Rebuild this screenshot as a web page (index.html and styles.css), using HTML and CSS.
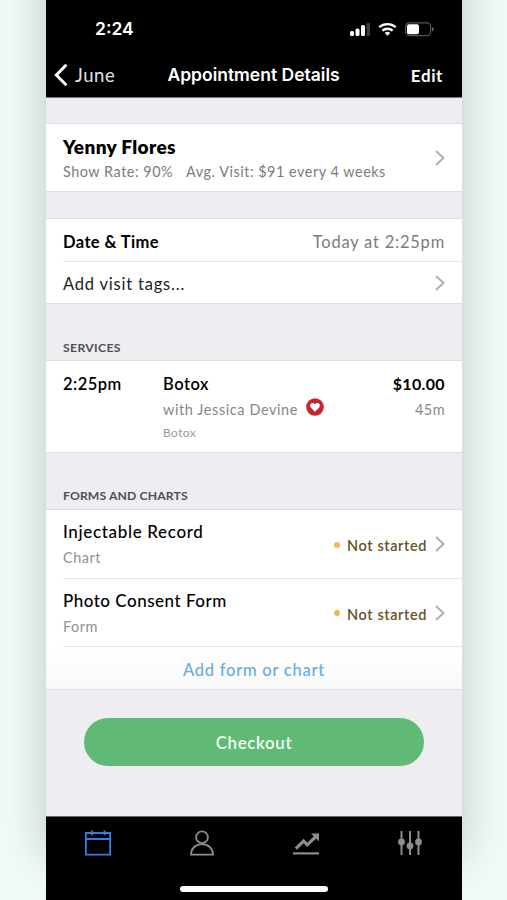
FILE: index.html
```html
<!DOCTYPE html>
<html lang="en">
<head>
<meta charset="utf-8">
<title>Appointment Details</title>
<link rel="stylesheet" href="styles.css">
</head>
<body>
<main class="phone">
  <header class="top">
    <div class="status">
      <span class="clock">2:24</span>
      <svg class="status-icons" width="86" height="18" viewBox="0 0 86 18">
        <g fill="#fff"><rect x="1" y="10" width="4" height="5" rx="1.5"/><rect x="6.5" y="7.5" width="4" height="7.5" rx="1.5"/><rect x="12" y="4" width="4" height="11" rx="1.5"/></g>
        <rect x="17.5" y="2" width="3.6" height="13" rx="1" fill="#3b3b3b"/>
        <g fill="none" stroke="#fff" stroke-width="2.4"><path d="M30.2 6.2a12.6 12.6 0 0 1 16.6 0"/><path d="M33.4 9.7a7.7 7.7 0 0 1 10.2 0"/></g>
        <path d="M38.5 14.8l-2.7-2.8a4 4 0 0 1 5.4 0z" fill="#fff"/>
        <rect x="56.6" y="1.9" width="25" height="12.8" rx="3.6" fill="none" stroke="#555" stroke-width="1.2"/>
        <rect x="58" y="3.3" width="12" height="10" rx="2" fill="#fff"/>
        <path d="M83 6v4.6q1.8-.9 1.8-2.3T83 6z" fill="#666"/>
      </svg>
    </div>
    <nav class="nav">
      <span class="back"><svg width="14" height="24" viewBox="0 0 14 24" fill="none" stroke="#fff" stroke-width="3"><path d="M12.4 1.8 2.4 12l10 10.2"/></svg><span class="june">June</span></span>
      <h1 class="heading">Appointment Details</h1>
      <span class="edit">Edit</span>
    </nav>
  </header>

  <section class="card client">
    <div class="stack">
      <strong class="name">Yenny Flores</strong>
      <div class="stats"><span>Show Rate: 90%</span><span>Avg. Visit: $91 every 4 weeks</span></div>
    </div>
    <svg class="chev" viewBox="0 0 10 16"><path d="M1 1l7.5 7L1 15"/></svg>
  </section>

  <section class="card visit">
    <div class="row"><span class="date-label">Date &amp; Time</span><span class="date-value">Today at 2:25pm</span></div>
    <div class="row"><span class="tags">Add visit tags...</span><svg class="chev" viewBox="0 0 10 16"><path d="M1 1l7.5 7L1 15"/></svg></div>
  </section>

  <h2 class="section services-title">SERVICES</h2>
  <section class="card service">
    <span class="time">2:25pm</span>
    <div class="treatment">
      <span class="botox">Botox</span>
      <span class="with"><span class="with-name">with Jessica Devine</span><svg width="18" height="18" viewBox="0 0 18 18"><circle cx="9" cy="9" r="8.8" fill="#c4262b"/><path d="M9 13.8 5 9.8C3.3 8 4.2 5 6.6 5 7.8 5 8.6 5.7 9 6.5 9.4 5.7 10.2 5 11.4 5c2.4 0 3.3 3 1.6 4.8z" fill="#fff"/></svg></span>
      <span class="small">Botox</span>
    </div>
    <div class="cost"><span class="price">$10.00</span><span class="mins">45m</span></div>
  </section>

  <h2 class="section forms-title">FORMS AND CHARTS</h2>
  <section class="card forms">
    <div class="form-row">
      <div class="stack"><span class="form-name injectable">Injectable Record</span><span class="kind">Chart</span></div>
      <i class="dot"></i><span class="state">Not started</span><svg class="chev" viewBox="0 0 10 16"><path d="M1 1l7.5 7L1 15"/></svg>
    </div>
    <div class="form-row">
      <div class="stack"><span class="form-name">Photo Consent Form</span><span class="kind">Form</span></div>
      <i class="dot"></i><span class="state">Not started</span><svg class="chev" viewBox="0 0 10 16"><path d="M1 1l7.5 7L1 15"/></svg>
    </div>
    <div class="add"><span>Add form or chart</span></div>
  </section>

  <button class="checkout" type="button">Checkout</button>

  <footer class="tabs">
    <div class="icons">
      <svg viewBox="0 0 28 26" fill="none" stroke="#397be6" stroke-width="1.8"><path d="M1.9 3h24.2v21.6H1.9zM1.9 9h24.2M7.9.6v4.6M20.5.6v4.6"/></svg>
      <svg viewBox="0 0 28 26" fill="none" stroke="#8d8d8d" stroke-width="1.8"><circle cx="14" cy="7.3" r="5.9"/><path d="M3 24.6h22c0-6.3-4.8-10.5-11-10.5S3 18.3 3 24.6z"/></svg>
      <svg viewBox="0 0 28 26" fill="none" stroke="#8d8d8d"><path d="M1 23.4h26" stroke-width="2.2"/><path d="M3.8 18.6 11.6 11l3.6 3.8L23.5 7" stroke-width="3.2"/><path d="M19 3.6h8v8z" fill="#8d8d8d" stroke="none"/></svg>
      <svg viewBox="0 0 28 26" fill="#8d8d8d" stroke="#8d8d8d" stroke-width="2"><path d="M5.5 1v24M14 1v24M22.5 1v24"/><g stroke="none"><circle cx="5.5" cy="12" r="3.4"/><circle cx="14" cy="16" r="3.4"/><circle cx="22.5" cy="12" r="3.4"/></g></svg>
    </div>
    <div class="home"></div>
  </footer>
</main>
</body>
</html>
```
FILE: styles.css
```css
* { box-sizing: border-box; }
html, body { height: 100%; }
body {
  margin: 0;
  overflow: hidden;
  background: #f0fbf8;
  font-family: Lato, "Liberation Sans", sans-serif;
  color: #000;
}
.phone {
  position: relative;
  width: 416px;
  height: 900px;
  margin-left: 46px;
  display: flex;
  flex-direction: column;
  background: #eeedf2;
}
.phone::before {
  content: "";
  position: absolute;
  inset: -60px 0 44px;
  z-index: -1;
  box-shadow: 0 0 42px rgba(20, 10, 15, .22);
}
h1, h2 { margin: 0; }
span, strong { white-space: nowrap; }
.top { flex: none; height: 98px; background: #000; color: #fff; border-bottom: 1px solid #77777b; }
.status { display: flex; justify-content: space-between; align-items: center; height: 58px; padding: 0 27px 0 49px; }
.clock { font: 600 17.5px/20px Inter, sans-serif; }
.status-icons { margin-top: 1px; }
.nav { display: grid; grid-template-columns: 100px 1fr 90px; align-items: center; height: 34px; padding: 0 19px 0 8px; }
.back { display: flex; align-items: center; gap: 7px; }
.june { font-size: 18.5px; letter-spacing: .6px; color: #e2e2e2; }
.heading { font: 600 17.5px/22px Inter, sans-serif; white-space: nowrap; text-align: center; }
.edit { justify-self: end; font-size: 17px; font-weight: 700; letter-spacing: .6px; }

.card { flex: none; background: #fff; border-top: 1px solid #dedee2; border-bottom: 1px solid #dedee2; }
.chev { flex: none; width: 10px; height: 16px; fill: none; stroke: #adadb0; stroke-width: 1.9; }
.client { height: 69px; margin-top: 25px; padding: 0 17px; display: flex; align-items: center; justify-content: space-between; }
.stack { display: flex; flex-direction: column; }
.client .stack { padding-top: 2px; }
.name { font-size: 19px; line-height: 24px; font-weight: 800; letter-spacing: .35px; }
.stats { display: flex; gap: 13px; font-size: 14.4px; line-height: 20px; margin-top: 3px; color: #7c7c7c; letter-spacing: .53px; }

.visit { height: 86px; margin-top: 26px; padding-left: 17px; }
.row { height: 42px; padding-right: 17px; display: flex; align-items: center; justify-content: space-between; }
.row + .row { height: 43px; border-top: 1px solid #e4e4e6; }
.row .chev { margin-top: 0; }
.date-label { padding-top: 3px; font-size: 16.5px; font-weight: 700; letter-spacing: .4px; }
.date-value { padding-top: 3px; font-size: 16.5px; color: #7c7c7c; letter-spacing: .78px; }
.tags { padding-top: 2px; font-size: 16.5px; color: #222; letter-spacing: .8px; }

.section { flex: none; padding-left: 17px; font-size: 12.2px; line-height: 16px; font-weight: 700; color: #505054; }
.services-title { margin-top: 36px; letter-spacing: .35px; }
.service { display: flex; height: 93px; margin-top: 4px; padding: 11px 17px 0; }
.time { width: 100px; font-size: 16.5px; line-height: 24px; font-weight: 600; letter-spacing: .45px; }
.treatment { flex: 1; display: flex; flex-direction: column; align-items: flex-start; }
.botox { font-size: 16.5px; line-height: 24px; font-weight: 600; letter-spacing: .5px; }
.with { display: flex; align-items: center; gap: 8px; height: 26px; font-size: 14.5px; color: #868686; letter-spacing: .58px; }
.with svg { margin-top: -4px; }
.small { font-size: 12px; line-height: 22px; color: #999; letter-spacing: .4px; }
.cost { display: flex; flex-direction: column; align-items: flex-end; }
.price { font-size: 16px; line-height: 24px; font-weight: 700; letter-spacing: .35px; }
.mins { font-size: 14.5px; line-height: 27px; color: #8a8a8a; letter-spacing: .4px; }

.forms-title { margin-top: 35px; letter-spacing: .12px; }
.forms { height: 181px; margin-top: 5px; background: linear-gradient(#fff 140px, #f9f9fa); }
.form-row { height: 68px; margin-left: 17px; padding-right: 17px; display: flex; align-items: center; }
.form-row + .form-row { border-top: 1px solid #e4e4e6; }
.form-row .stack { flex: 1; }
.form-name { font-size: 17px; line-height: 24px; font-weight: 500; letter-spacing: .5px; }
.form-name.injectable { letter-spacing: .66px; }
.kind { font-size: 14.5px; line-height: 20px; margin-top: 4px; color: #919191; letter-spacing: .5px; }
.dot { width: 6px; height: 6px; margin: 1px 7px 0 0; border-radius: 50%; background: #f2ba4c; }
.state { margin: 3px 8px 0 0; font-size: 14.5px; font-weight: 600; color: #665126; letter-spacing: .6px; }
.add { height: 43px; margin-left: 17px; border-top: 1px solid #e4e4e6; padding: 3px 17px 0 0; display: flex; align-items: center; justify-content: center; color: #66ade0; font-size: 16.5px; font-weight: 500; letter-spacing: .75px; }

.checkout { flex: none; width: 340px; height: 48px; margin: 28px 0 0 38px; padding: 2px 0 0; border: 0; border-radius: 24px; background: #61b976; color: #f4fff6; font: 600 16.8px/20px Lato, sans-serif; letter-spacing: .7px; }
.tabs { height: 84px; margin-top: auto; padding-top: 13px; background: #000; border-top: 1px solid #66666a; display: flex; flex-direction: column; align-items: center; }
.icons { width: 100%; display: grid; grid-template-columns: repeat(4, 104px); justify-items: center; }
.icons svg { width: 28px; height: 26px; }
.home { width: 148px; height: 6px; margin-top: 30px; border-radius: 3px; background: #fff; }
```
